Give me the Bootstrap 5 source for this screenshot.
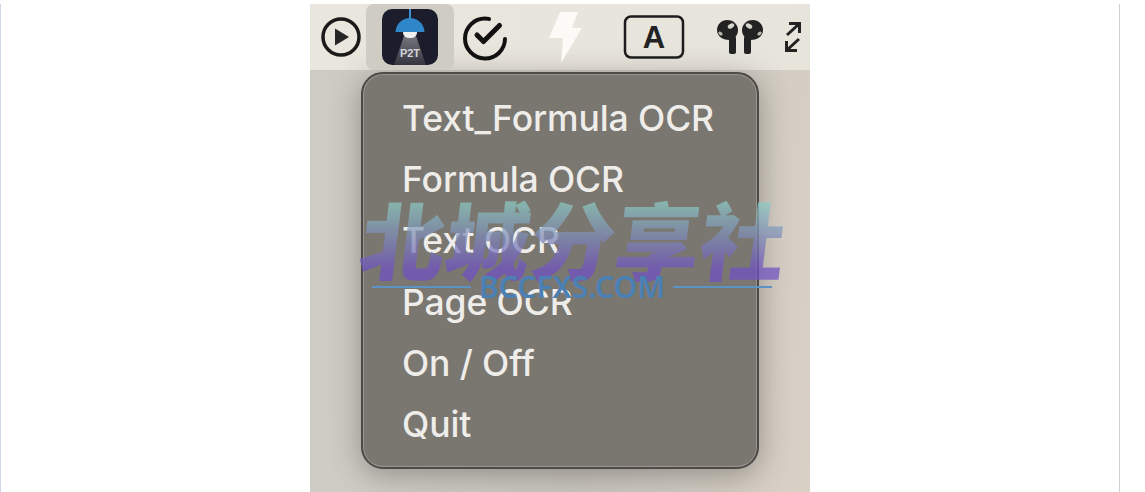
<!DOCTYPE html>
<html lang="en">
  <head>
    <meta charset="UTF-8" />
    <title>P2T menu</title>
    <link rel="stylesheet" href="https://cdn.jsdelivr.net/npm/bootstrap@5.3.0/dist/css/bootstrap.min.css" />
    <style>
      html, body { height: 492px; overflow: hidden; background: #fff; }
      .page-frame {
        width: 1120px; height: 492px;
        border-left: 1px solid #cfd6e8; border-right: 1px solid #cfcfd6;
      }
      .shot {
        position: relative; width: 500px; height: 488px; margin-top: 4px; margin-left: 309px;
        background: linear-gradient(100deg, #cdcbc3 0%, #cecdc6 30%, #cbc8c1 60%, #d9d1c6 100%);
        overflow: hidden;
      }
      .menu-strip { height: 66px; background: linear-gradient(90deg, #e9e6dd, #e7e4dc); padding-left: 10px; }
      .strip-item { height: 66px; flex: none; }
      .strip-active { width: 88px; height: 66px; margin-left: 4px; background: #cfccc3; border-radius: 8px; flex: none; }
      .gap-check { margin-left: 6px; }
      .gap-bolt { margin-left: 37px; }
      .gap-key { margin-left: 36px; }
      .gap-pods { margin-left: 31px; }
      .gap-resize { margin-left: 20px; }
      .drop-panel {
        width: 398px; height: 397px; margin: 2px 0 0 51px; padding: 14px 0 0 39px;
        background: #7a7670; border: 2px solid #4c4a47; border-radius: 22px;
        box-shadow: 0 0 0 1px #9a968f inset, 0 6px 30px rgba(70, 66, 60, .45);
        list-style: none;
      }
      .drop-panel li {
        height: 61.2px; line-height: 61px; color: #efedea;
        font-family: Inter, "Noto Sans", sans-serif; font-size: 35.5px; font-weight: 500; letter-spacing: -.1px; white-space: nowrap;
      }
      .mark-title {
        position: absolute; left: 51px; top: 187px; width: 440px;
        font-family: "Noto Sans CJK SC", sans-serif; font-weight: 900;
        font-size: 85px; line-height: 92px; letter-spacing: 0; white-space: nowrap;
        background: linear-gradient(180deg, #8ccac4 14%, #7f8bb8 50%, #6f50c4 86%);
        -webkit-background-clip: text; background-clip: text; color: transparent;
        opacity: .72; transform: skewX(-7deg);
      }
      .mark-sub {
        position: absolute; left: 62px; top: 268px; width: 400px; color: #4b80b4;
        font-family: "Noto Sans", sans-serif; font-weight: 600; font-size: 30px; line-height: 30px;
      }
      .mark-sub i { flex: 1; height: 2px; background: #5d93c3; }
    </style>
  </head>
  <body>
    <div class="page-frame">
      <div class="shot">
        <div class="menu-strip d-flex align-items-center">
          <div class="strip-item d-flex align-items-center">
            <svg width="42" height="42" viewBox="0 0 42 42"><circle cx="21" cy="21" r="18" fill="none" stroke="#1a1a1a" stroke-width="3.500"/><path d="M15 12.500 L29 21 L15 29.500Z" fill="#262626"/></svg>
          </div>
          <div class="strip-active d-flex align-items-center justify-content-center">
            <svg width="56" height="56" viewBox="0 0 56 56">
              <defs><linearGradient id="beam" x1="0" y1="0" x2="0" y2="1"><stop offset="0" stop-color="#77777f"/><stop offset="1" stop-color="#34343f"/></linearGradient></defs>
              <rect width="56" height="56" rx="10" fill="#1c1d2c"/>
              <path d="M22 27 L34 27 L44 56 L12 56Z" fill="url(#beam)"/>
              <rect x="27" y="0" width="2" height="10" fill="#3d8fd0"/>
              <path d="M13.500 23 C14 14 21 9 28 9 C35 9 42 14 42.500 23Z" fill="#2f86c9"/>
              <path d="M21 23 H35 C35 27 32 29 28 29 C24 29 21 27 21 23Z" fill="#efefef"/>
              <text x="28" y="48" text-anchor="middle" font-family="Liberation Sans, sans-serif" font-weight="700" font-size="11" fill="#d5d5d8">P2T</text>
            </svg>
          </div>
          <div class="strip-item d-flex align-items-center gap-check">
            <svg width="50" height="50" viewBox="0 0 50 50" fill="none" stroke="#111" stroke-linecap="round"><path d="M45 27 A20 20 0 1 1 25 6.500 C27 6.500 28 6.800 29 7" stroke-width="4"/><path d="M17 23 L23.500 29.500 L39.500 13.500" stroke-width="5" stroke-linejoin="round"/></svg>
          </div>
          <div class="strip-item d-flex align-items-center gap-bolt">
            <svg width="40" height="56" viewBox="0 0 40 56"><path d="M13 3 L31 3 L25 19 L35 19 L14 54 L16 29 L2 29Z" fill="#fbfaf7"/></svg>
          </div>
          <div class="strip-item d-flex align-items-center gap-key">
            <svg width="62" height="46" viewBox="0 0 62 46"><rect x="2" y="2.500" width="58" height="41" rx="6" fill="none" stroke="#1c1c1c" stroke-width="2.500"/><text x="31" y="34" text-anchor="middle" font-family="Liberation Sans, sans-serif" font-weight="700" font-size="31" fill="#222">A</text></svg>
          </div>
          <div class="strip-item d-flex align-items-center gap-pods">
            <svg width="48" height="34" viewBox="0 0 48 34">
              <path d="M1 10 C1 4 6 0 11 0 C18 0 22 5 22 10 C22 15 19 19 13 20 C8 20 1 17 1 10Z" fill="#222"/>
              <path d="M47 10 C47 4 42 0 37 0 C30 0 26 5 26 10 C26 15 29 19 35 20 C40 20 47 17 47 10Z" fill="#222"/>
              <ellipse cx="15" cy="6" rx="3.500" ry="2.200" fill="#d8d5cd" transform="rotate(-30 15 6)"/>
              <ellipse cx="33" cy="6" rx="3.500" ry="2.200" fill="#d8d5cd" transform="rotate(30 33 6)"/>
              <ellipse cx="4.500" cy="13.500" rx="2.500" ry="1.500" fill="#bbb8b0" transform="rotate(40 4.500 13.500)"/>
              <ellipse cx="43.500" cy="13.500" rx="2.500" ry="1.500" fill="#bbb8b0" transform="rotate(-40 43.500 13.500)"/>
              <rect x="13" y="16" width="7" height="18" rx="2" fill="#222"/>
              <rect x="28" y="16" width="7" height="18" rx="2" fill="#222"/>
            </svg>
          </div>
          <div class="strip-item d-flex align-items-center gap-resize">
            <svg width="18" height="32" viewBox="0 0 18 32" fill="none" stroke="#222" stroke-width="3"><path d="M5 2.500 H15.500 V12 M15.500 2.500 L3 14"/><path d="M2.500 20 V29.500 H13 M2.500 29.500 L15 18"/></svg>
          </div>
        </div>
        <ul class="drop-panel">
          <li>Text_Formula OCR</li>
          <li>Formula OCR</li>
          <li>Text OCR</li>
          <li>Page OCR</li>
          <li>On / Off</li>
          <li>Quit</li>
        </ul>
        <div class="mark-title">北城分享社</div>
        <div class="mark-sub d-flex align-items-center gap-2"><i></i><span>BCCFXS.COM</span><i></i></div>
      </div>
    </div>
    <script src="https://cdn.jsdelivr.net/npm/bootstrap@5.3.0/dist/js/bootstrap.bundle.min.js"></script>
  </body>
</html>
